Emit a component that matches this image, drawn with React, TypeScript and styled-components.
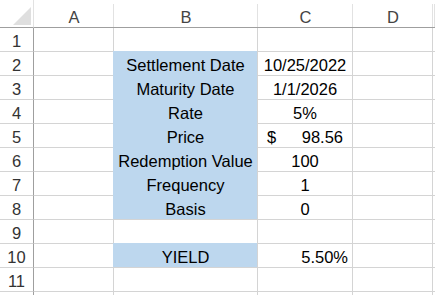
import React from "react"
import styled, { createGlobalStyle } from "styled-components"

const GlobalStyle = createGlobalStyle`
  html, body {
    margin: 0;
    padding: 0;
    background: #fff;
    overflow: hidden;
  }
  body {
    font-family: "Liberation Sans", Arial, sans-serif;
  }
`

const GRID = "#d4d4d4"
const HEAD_EDGE = "#9f9f9f"
const FILL = "#bdd7ee"

type Align = "left" | "center" | "right"

type Row = {
  label?: string
  value?: string
  align?: Align
  money?: boolean
  fill?: boolean
}

const rows: Row[] = [
  {},
  { label: "Settlement Date", value: "10/25/2022", align: "center", fill: true },
  { label: "Maturity Date", value: "1/1/2026", align: "center", fill: true },
  { label: "Rate", value: "5%", align: "center", fill: true },
  { label: "Price", value: "98.56", money: true, fill: true },
  { label: "Redemption Value", value: "100", align: "center", fill: true },
  { label: "Frequency", value: "1", align: "center", fill: true },
  { label: "Basis", value: "0", align: "center", fill: true },
  {},
  { label: "YIELD", value: "5.50%", align: "right", fill: true },
  {},
]

const columns = ["A", "B", "C", "D", ""]

const Sheet = styled.div`
  display: grid;
  grid-template-columns: 34px 80px 144px 95px 80px 2px;
  grid-template-rows: 28px;
  grid-auto-rows: 24px;
  width: 435px;
  height: 295px;
  overflow: hidden;
  font-size: 16.5px;
  color: #000;
`

const Corner = styled.div`
  border-bottom: 1px solid ${HEAD_EDGE};
  border-right: 1px solid #e2e2e2;
  display: flex;
  align-items: flex-end;
  justify-content: flex-end;
  padding: 0 2px 2px 0;
  box-sizing: border-box;
`

const ColHead = styled.div`
  position: relative;
  border-bottom: 1px solid ${HEAD_EDGE};
  display: flex;
  align-items: flex-end;
  justify-content: center;
  color: #444;
  box-sizing: border-box;

  &::after {
    content: "";
    position: absolute;
    top: 4px;
    bottom: 0;
    right: 0;
    width: 1px;
    background: #e2e2e2;
  }
`

const RowHead = styled.div`
  border-right: 1px solid ${HEAD_EDGE};
  border-bottom: 1px solid ${GRID};
  display: flex;
  align-items: flex-end;
  justify-content: center;
  color: #333;
  box-sizing: border-box;
`

const Cell = styled.div<{ $align?: Align; $fill?: boolean; $pad?: number }>`
  border-right: 1px solid ${GRID};
  border-bottom: 1px solid ${GRID};
  background: ${(p) => (p.$fill ? FILL : "transparent")};
  box-shadow: ${(p) => (p.$fill ? `-1px -1px 0 0 ${FILL}` : "none")};
  display: flex;
  align-items: flex-end;
  justify-content: ${(p) =>
    p.$align === "right" ? "flex-end" : p.$align === "left" ? "flex-start" : "center"};
  padding: 0 ${(p) => p.$pad ?? 2}px;
  white-space: nowrap;
  overflow: hidden;
  box-sizing: border-box;
`

const Money = styled(Cell)`
  justify-content: space-between;
  padding: 0 9px;
`

const CornerMark = () => (
  <svg width="18" height="18" viewBox="0 0 18 18">
    <polygon points="18,0 18,18 0,18" fill="#dfdfdf" />
  </svg>
)

export default function App() {
  return (
    <>
      <GlobalStyle />
      <Sheet>
        <Corner>
          <CornerMark />
        </Corner>
        {columns.map((c, i) => (
          <ColHead key={i}>{c}</ColHead>
        ))}

        {rows.map((r, i) => (
          <React.Fragment key={i}>
            <RowHead>{i + 1}</RowHead>
            <Cell />
            <Cell $fill={r.fill}>{r.label}</Cell>
            {r.money ? (
              <Money $fill={false}>
                <span>$</span>
                <span>{r.value}</span>
              </Money>
            ) : (
              <Cell $align={r.align} $pad={r.align === "right" ? 4 : 2}>
                {r.value}
              </Cell>
            )}
            <Cell />
            <Cell />
          </React.Fragment>
        ))}

        {/* next row, only its top edge shows */}
        <RowHead />
        <Cell />
        <Cell />
        <Cell />
        <Cell />
        <Cell />
      </Sheet>
    </>
  )
}
